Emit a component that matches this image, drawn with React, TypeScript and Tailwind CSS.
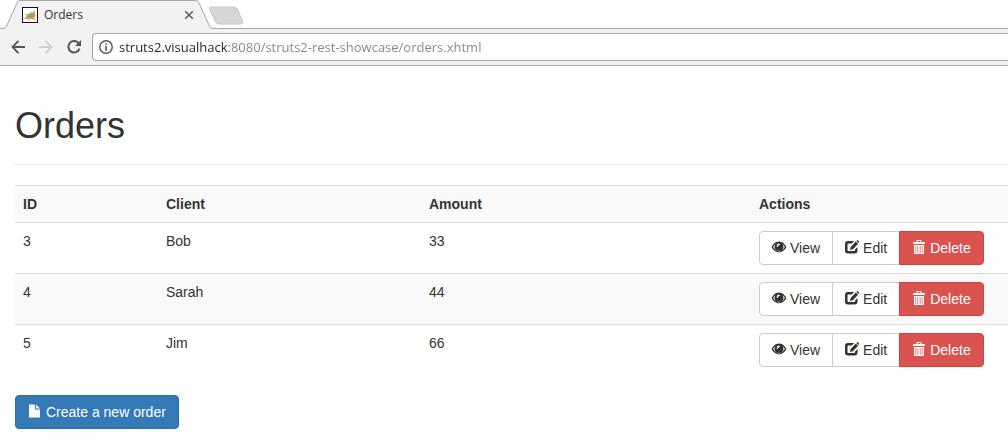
import { useState } from 'react';
import type { ReactNode } from 'react';

type Order = {
    id: number;
    client: string;
    amount: number;
};

const initialOrders: Order[] = [
    { id: 3, client: 'Bob', amount: 33 },
    { id: 4, client: 'Sarah', amount: 44 },
    { id: 5, client: 'Jim', amount: 66 },
];

function Icon({ children }: { children: ReactNode }) {
    return (
        <svg className="mb-0.5 h-3.5 w-3.5 shrink-0 overflow-visible" viewBox="0 0 14 14" fill="currentColor" aria-hidden="true">
            {children}
        </svg>
    );
}

function EyeIcon() {
    return (
        <Icon>
            <path
                fillRule="evenodd"
                d="M7 1.5C3.4 1.5 .8 4.6 -.4 7C.8 9.500 3.400 12.300 7 12.300S13.200 9.500 14.400 7C13.200 4.600 10.600 1.500 7 1.500ZM3.600 4.300A4.300 4.300 0 1 0 10.400 4.300C11.600 5.100 12.400 6.100 12.900 7C11.700 8.900 9.700 10.900 7 10.900S2.300 8.900 1.100 7C1.600 6.100 2.400 5.100 3.600 4.300ZM6.800 3.500L8.200 4.600L7 5.300C6.100 5.500 5.900 6.200 5.800 7L4.700 6.600C4.600 4.900 5.400 3.700 6.800 3.500Z"
            />
        </Icon>
    );
}

function EditIcon() {
    return (
        <Icon>
            <path d="M9.200 1H3A3 3 0 0 0 0 4V10.500A3 3 0 0 0 3 13.500H9.500A3 3 0 0 0 12.500 10.500V7L10 9.500V10.300A.8.8 0 0 1 9.200 11.100H3.300A.8.8 0 0 1 2.500 10.300V4.300A.8.8 0 0 1 3.300 3.500H6.700Z" />
            <path d="M10.800 1.500L13.100 3.800L7.900 9.200L4.900 10L5.700 6.900ZM11.400 .9L12 .3Q12.400 0 12.800 .3L14.100 1.500Q14.400 1.900 14.100 2.300L13.600 3.100Z" />
        </Icon>
    );
}

function TrashIcon() {
    return (
        <Icon>
            <path
                fillRule="evenodd"
                d="M4.500 2V.8Q4.500 0 5.300 0H8.700Q9.500 0 9.500 .8V2H12.300Q13 2 13 2.700V4H1V2.700Q1 2 1.700 2ZM5.500 1V2H8.500V1ZM2 5H12V13Q12 14 11 14H3Q2 14 2 13ZM3.500 6V13H4.200V6ZM5.500 6V13H6.200V6ZM7.800 6V13H8.500V6ZM9.800 6V13H10.500V6Z"
            />
        </Icon>
    );
}

function FileIcon() {
    return (
        <Icon>
            <path d="M1 .5H7V5.500H12V13A.5.5 0 0 1 11.500 13.500H1.500A.5.5 0 0 1 1 13ZM8 .5L12 4.500H8Z" />
        </Icon>
    );
}

function BrowserChrome() {
    const [address, setAddress] = useState('struts2.visualhack:8080/struts2-rest-showcase/orders.xhtml');

    return (
        <header className="font-['Open_Sans',sans-serif]">
            <div className="flex h-7 items-start">
                <div className="relative flex h-7 w-[214px] items-center pl-[22px] pr-5 pt-0.5">
                    <svg className="absolute inset-x-0 top-0 h-[29px] w-full" viewBox="0 0 214 29" fill="none" aria-hidden="true">
                        <path d="M3 28.500C6 28 6 27 7 25L17 3Q18 .5 21 .5H195Q198 .5 199 3L209 25C210 27 210 28 213 28.500" fill="#f2f2f2" stroke="#a6a6a6" />
                    </svg>
                    <svg className="relative h-4 w-4 shrink-0" viewBox="0 0 16 16" aria-hidden="true">
                        <rect x=".5" y=".5" width="15" height="15" fill="#fff" stroke="#111122" />
                        <path d="M2 12L5 9L3 7L7 7L9 5L11 6L13 3V7L14 9L12 11L14 13L9 12L5 13L6 11Z" fill="#c5a86c" />
                        <path d="M3 12L7 9L10 10L12 8M7 7L10 8L12 5" fill="none" stroke="#8f7444" strokeWidth=".7" />
                    </svg>
                    <span className="relative ml-1.5 flex-1 text-xs text-[#333]">Orders</span>
                    <button type="button" aria-label="Close tab" className="relative text-[#5f5f5f]">
                        <svg className="h-2.5 w-2.5" viewBox="0 0 10 10" stroke="currentColor" strokeWidth="1.6" aria-hidden="true">
                            <path d="M1.200 1.200L8.800 8.800M8.800 1.200L1.200 8.800" />
                        </svg>
                    </button>
                </div>
                <button type="button" aria-label="New tab" className="-ml-1.5 mt-1.5">
                    <svg className="h-[19px] w-9" viewBox="0 0 36 19" aria-hidden="true">
                        <path d="M3 1H26Q28.500 1 29.500 3L34.500 15.500Q35 18 33 18H11Q8.500 18 7.500 16L1.500 3Q1 1 3 1Z" fill="#d6d6d6" stroke="#c8c8c8" />
                    </svg>
                </button>
            </div>
            <div className="flex">
                <span className="h-px w-1 bg-[#a6a6a6]" />
                <span className="h-px w-52 bg-[#f2f2f2]" />
                <span className="h-px flex-1 bg-[#a6a6a6]" />
            </div>
            <div className="flex h-[37px] items-center border-b border-[#a9a9a9] bg-[#f2f2f2] pl-[11px] text-[#555]">
                <button type="button" aria-label="Back">
                    <svg className="h-3.5 w-3.5" viewBox="0 0 14 14" fill="none" stroke="currentColor" strokeWidth="1.800" aria-hidden="true">
                        <path d="M7.500 .8L1.500 7L7.500 13.200M1.500 7H14" />
                    </svg>
                </button>
                <button type="button" aria-label="Forward" disabled className="ml-3.5 text-[#d0d0d0]">
                    <svg className="h-3.5 w-3.5" viewBox="0 0 14 14" fill="none" stroke="currentColor" strokeWidth="1.800" aria-hidden="true">
                        <path d="M6.500 .8L12.500 7L6.500 13.200M12.500 7H0" />
                    </svg>
                </button>
                <button type="button" aria-label="Reload" className="ml-3.5">
                    <svg className="h-3.5 w-3.5" viewBox="0 0 14 14" aria-hidden="true">
                        <path d="M11.800 3.500A5.700 5.700 0 1 0 12.500 8.700" fill="none" stroke="currentColor" strokeWidth="2" />
                        <path d="M14 0V6H8Z" fill="currentColor" />
                    </svg>
                </button>
                <div className="ml-[11px] flex h-7 flex-1 items-center rounded-l-sm border border-r-0 border-[#a6a6a6] bg-white pl-1.5">
                    <svg className="h-3.5 w-3.5 shrink-0" viewBox="0 0 14 14" aria-hidden="true">
                        <circle cx="7" cy="7" r="6.200" fill="none" stroke="currentColor" strokeWidth="1.400" />
                        <path d="M6.200 3.200H7.800V4.800H6.200ZM6.200 6H7.800V10.800H6.200Z" fill="currentColor" />
                    </svg>
                    <input
                        type="text"
                        aria-label="Address"
                        spellCheck={false}
                        value={address}
                        onChange={(e) => setAddress(e.target.value)}
                        className="ml-1.5 min-w-0 flex-1 bg-[linear-gradient(90deg,#222_109px,#858585_109px)] bg-clip-text text-[13px] leading-5 text-transparent caret-black outline-none"
                    />
                </div>
            </div>
        </header>
    );
}

export default function App() {
    const [orders, setOrders] = useState<Order[]>(initialOrders);

    const handleDelete = (id: number) => {
        setOrders(orders.filter((o) => o.id !== id));
    };

    return (
        <div className="min-h-screen overflow-hidden bg-white">
            <BrowserChrome />
            <main className="pl-[15px] pt-10 font-['Liberation_Sans',Arial,sans-serif] text-sm leading-5 text-[#333]">
                <h1 className="mb-5 border-b border-[#eee] pb-[18px] text-[36px] leading-10">Orders</h1>

                <table className="mb-5 w-full table-fixed border-collapse text-left">
                    <thead>
                        <tr className="border-t border-[#ddd] bg-[#f9f9f9]">
                            <th className="w-[143px] p-2">ID</th>
                            <th className="w-[263px] p-2">Client</th>
                            <th className="w-[330px] p-2">Amount</th>
                            <th className="p-2">Actions</th>
                        </tr>
                    </thead>
                    <tbody>
                        {orders.map((order) => (
                            <tr key={order.id} className="border-t border-[#ddd] align-top even:bg-[#f9f9f9]">
                                <td className="p-2">{order.id}</td>
                                <td className="p-2">{order.client}</td>
                                <td className="p-2">{order.amount}</td>
                                <td className="p-2">
                                    <div className="flex">
                                        <button type="button" className="flex items-center gap-1 rounded-l border border-[#ccc] bg-white px-3 py-1.5 hover:bg-[#e6e6e6]">
                                            <EyeIcon />
                                            View
                                        </button>
                                        <button type="button" className="-ml-px flex items-center gap-1 border border-[#ccc] bg-white px-3 py-1.5 hover:bg-[#e6e6e6]">
                                            <EditIcon />
                                            Edit
                                        </button>
                                        <button
                                            type="button"
                                            onClick={() => handleDelete(order.id)}
                                            className="-ml-px flex items-center gap-1 rounded-r border border-[#d43f3a] bg-[#d9534f] px-3 py-1.5 text-white hover:bg-[#c9302c]"
                                        >
                                            <TrashIcon />
                                            Delete
                                        </button>
                                    </div>
                                </td>
                            </tr>
                        ))}
                    </tbody>
                </table>

                <button type="button" className="flex items-center gap-1 rounded border border-[#2e6da4] bg-[#337ab7] px-3 py-1.5 text-white hover:bg-[#286090]">
                    <FileIcon />
                    Create a new order
                </button>
            </main>
        </div>
    );
}
